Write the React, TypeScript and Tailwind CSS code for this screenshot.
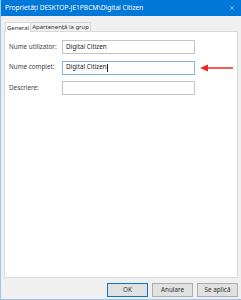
import { X } from "lucide-react";

const font = { fontFamily: '"Segoe UI", "Noto Sans", "Liberation Sans", sans-serif' };

function Field({ label, value, focused }: { label: string; value?: string; focused?: boolean }) {
  return (
    <div className="flex items-center h-[14px]">
      <span className="w-[53px] text-[6.3px] text-[#444] leading-none">{label}</span>
      <div
        className={
          focused
            ? "w-[133px] h-[14px] border border-[#7eb4ea] bg-white flex items-center pl-[3px] text-[6.3px] leading-none text-[#222]"
            : "w-[133px] h-[14px] border border-[#c4c4c4] bg-white flex items-center pl-[3px] text-[6.3px] leading-none text-[#222]"
        }
      >
        {value}
        {focused && <span className="w-px h-[8px] bg-[#222]" />}
      </div>
    </div>
  );
}

export default function App() {
  return (
    <div
      style={font}
      className="w-[241px] h-[300px] bg-[#f0f0f0] flex flex-col border-l border-b border-[#9cc3ec] overflow-hidden"
    >
      {/* Title bar */}
      <div className="h-[16px] bg-[#0078d7] flex items-center justify-between pl-[4px] pr-[5px] shrink-0">
        <span className="text-white text-[6.6px] leading-none whitespace-nowrap">
          Proprietăți DESKTOP-JE1PBCM\Digital Citizen
        </span>
        <X className="w-[8px] h-[8px] text-white" strokeWidth={1.3} />
      </div>

      {/* Tabs */}
      <div className="flex pl-[4px] pt-[5px] h-[10px] box-content items-end shrink-0">
        <div className="h-[10px] px-[1px] bg-white border border-b-0 border-[#d9d9d9] text-[6px] text-[#333] leading-none flex items-center relative top-px z-10">
          General
        </div>
        <div className="h-[9px] px-[1px] bg-[#f0f0f0] border border-l-0 border-b-0 border-[#d9d9d9] text-[6px] text-[#333] leading-none flex items-center">
          Apartenență la grup
        </div>
      </div>

      {/* Panel */}
      <div className="ml-[3px] mr-[3px] h-[247px] bg-white border border-[#d9d9d9] flex shrink-0">
        <div className="flex flex-col gap-[6.5px] pt-[8px] pl-[4px]">
          <Field label="Nume utilizator:" value="Digital Citizen" />
          <Field label="Nume complet:" value="Digital Citizen" focused />
          <Field label="Descriere:" />
        </div>
        <svg width="36" height="8" viewBox="0 0 36 8" className="mt-[32px] ml-[5px]">
          <line x1="6" y1="4" x2="33" y2="4" stroke="#e8291b" strokeWidth="1.5" />
          <polygon points="0,4 8,0.5 8,7.5" fill="#e8291b" />
        </svg>
      </div>

      {/* Buttons */}
      <div className="flex justify-end gap-[4px] pr-[3px] pt-[5px]">
        <button className="w-[41px] h-[14px] bg-[#e1e1e1] border border-[#0078d7] text-[6.3px] text-[#333] leading-none">OK</button>
        <button className="w-[41px] h-[14px] bg-[#e1e1e1] border border-[#adadad] text-[6.3px] text-[#333] leading-none">Anulare</button>
        <button className="w-[41px] h-[14px] bg-[#e1e1e1] border border-[#adadad] text-[6.3px] text-[#333] leading-none">Se aplică</button>
      </div>
    </div>
  );
}
